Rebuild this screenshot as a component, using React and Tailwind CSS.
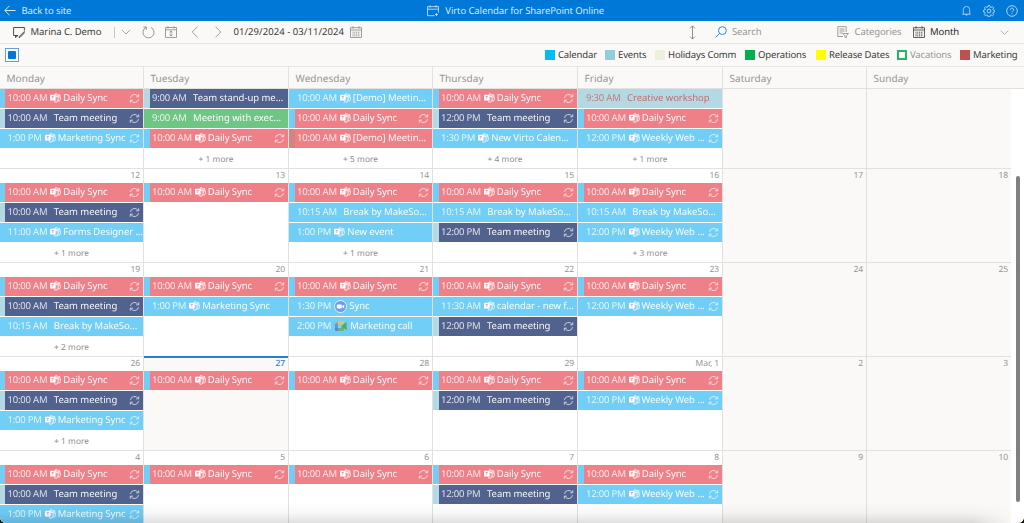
import React from 'react';

const EVENT_COLORS = {
    red: 'bg-[#f08088] text-white',
    blue: 'bg-[#70cef7] text-white',
    navy: 'bg-[#51628f] text-white',
    green: 'bg-[#6fc684] text-white',
    teal: 'bg-[#b2d9e4] text-[#cc6664]',
};

const STRIP_COLORS = {
    blue: 'border-l-[#70cef7]',
    teal: 'border-l-[#b2d9e4]',
    brown: 'border-l-[#d08580]',
};

const daily = { time: '10:00 AM', icon: 'teams', title: 'Daily Sync', color: 'red', strip: 'blue', repeat: true };
const team = (time) => ({ time, title: 'Team meeting', color: 'navy', strip: 'teal', repeat: true });
const marketing = { time: '1:00 PM', icon: 'teams', title: 'Marketing Sync', color: 'blue', repeat: true };
const weekly = { time: '12:00 PM', icon: 'teams', title: 'Weekly Web ...', color: 'blue', repeat: true };
const breakBy = { time: '10:15 AM', title: 'Break by MakeSo...', color: 'blue' };

const weeks = [
    [
        { events: [daily, team('10:00 AM'), marketing] },
        {
            events: [
                { time: '9:00 AM', title: 'Team stand-up me...', color: 'navy', strip: 'teal' },
                { time: '9:00 AM', title: 'Meeting with exec...', color: 'green' },
                daily,
            ],
            more: 1,
        },
        {
            events: [
                { time: '10:00 AM', icon: 'teams', title: '[Demo] Meetin...', color: 'blue' },
                daily,
                { time: '10:00 AM', icon: 'teams', title: '[Demo] Meetin...', color: 'red', strip: 'brown' },
            ],
            more: 5,
        },
        {
            events: [daily, team('12:00 PM'), { time: '1:30 PM', icon: 'teams', title: 'New Virto Calen...', color: 'blue' }],
            more: 4,
        },
        { events: [{ time: '9:30 AM', title: 'Creative workshop', color: 'teal' }, daily, weekly], more: 1 },
        {},
        {},
    ],
    [
        {
            date: '12',
            events: [daily, team('10:00 AM'), { time: '11:00 AM', icon: 'teams', title: 'Forms Designer ...', color: 'blue' }],
            more: 1,
        },
        { date: '13', events: [daily] },
        { date: '14', events: [daily, breakBy, { time: '1:00 PM', icon: 'teams', title: 'New event', color: 'blue' }], more: 1 },
        { date: '15', events: [daily, breakBy, team('12:00 PM')] },
        { date: '16', events: [daily, breakBy, weekly], more: 3 },
        { date: '17' },
        { date: '18' },
    ],
    [
        { date: '19', events: [daily, team('10:00 AM'), breakBy], more: 2 },
        { date: '20', events: [daily, { ...marketing, repeat: false }] },
        {
            date: '21',
            events: [
                daily,
                { time: '1:30 PM', icon: 'zoom', title: 'Sync', color: 'blue' },
                { time: '2:00 PM', icon: 'meet', title: 'Marketing call', color: 'blue' },
            ],
        },
        {
            date: '22',
            events: [daily, { time: '11:30 AM', icon: 'teams', title: 'calendar - new f...', color: 'blue' }, team('12:00 PM')],
        },
        { date: '23', events: [daily, weekly] },
        { date: '24' },
        { date: '25' },
    ],
    [
        { date: '26', events: [daily, team('10:00 AM'), marketing], more: 1 },
        { date: '27', events: [daily], today: true },
        { date: '28', events: [daily] },
        { date: '29', events: [daily, team('12:00 PM')] },
        { date: 'Mar, 1', events: [daily, weekly] },
        { date: '2' },
        { date: '3' },
    ],
    [
        { date: '4', events: [daily, team('10:00 AM'), marketing] },
        { date: '5', events: [daily] },
        { date: '6', events: [daily] },
        { date: '7', events: [daily, team('12:00 PM')] },
        { date: '8', events: [daily, weekly] },
        { date: '9' },
        { date: '10' },
    ],
];

const days = ['Monday', 'Tuesday', 'Wednesday', 'Thursday', 'Friday', 'Saturday', 'Sunday'];

const legend = [
    { name: 'Calendar', box: 'bg-[#00bcf2]', width: 'w-[60px]' },
    { name: 'Events', box: 'bg-[#92cddc]', width: 'w-[50px]' },
    { name: 'Holidays Comm', box: 'bg-[#ebf1dd]', width: 'w-[90px]' },
    { name: 'Operations', box: 'bg-[#00b050]', width: 'w-[71px]' },
    { name: 'Release Dates', box: 'bg-[#ffff00]', width: 'w-[81px]' },
    { name: 'Vacations', box: 'border-2 border-[#21b865] bg-white', width: 'w-[63px]', off: true },
    { name: 'Marketing', box: 'bg-[#c0504d]', width: 'w-[60px]' },
];

const GRID = 'grid grid-cols-[144px_145px_144px_145px_145px_144px_144px]';

const Icon = ({ children, className, box = '0 0 12 12', stroke = 0.8 }) => (
    <svg viewBox={box} className={`shrink-0 ${className}`} fill="none" stroke="currentColor" strokeWidth={stroke}>
        {children}
    </svg>
);

const TeamsIcon = () => (
    <svg viewBox="0 0 11 10" className="h-[10px] w-[11px] shrink-0" fill="none" stroke="#fff" strokeWidth="0.8">
        <circle cx="6.2" cy="1.8" r="1.2" fill="#fff" fillOpacity="0.2" />
        <circle cx="9.2" cy="2.2" r="0.8" fill="#fff" fillOpacity="0.2" />
        <path d="M5.5 3.6h2.7v3.2a2.4 2.4 0 0 1-4.3 1.5" fill="#fff" fillOpacity="0.15" />
        <path d="M8.4 3.8h1.9v2.5a1.7 1.7 0 0 1-2 1.7" />
        <rect x="0" y="1.8" width="5.6" height="5.6" rx="0.5" fill="#fff" stroke="none" />
        <path d="M1.5 3.4h2.6M2.8 3.4v2.6" stroke="#d98f9c" strokeWidth="0.7" />
    </svg>
);

const ZoomIcon = () => (
    <svg viewBox="0 0 13 13" className="h-[13px] w-[13px] shrink-0">
        <circle cx="6.5" cy="6.5" r="6.4" fill="#e3ebfb" />
        <circle cx="6.5" cy="6.5" r="5.5" fill="#6c9cf0" />
        <rect x="2.8" y="4.6" width="5" height="3.9" rx="0.8" fill="#fff" />
        <path d="M8.1 6.1 10.2 4.7v3.7L8.1 7z" fill="#fff" />
    </svg>
);

const MeetIcon = () => (
    <svg viewBox="0 0 12 10" className="h-[10px] w-[12px] shrink-0">
        <path d="M0 2.9 2.9 0v2.9z" fill="#e0807c" />
        <path d="M2.9 0h5.2q.9 0 .9.9v3.4L6.4 5V2.9H2.9z" fill="#e6c25c" />
        <path d="M0 2.9h2.9V7H0z" fill="#6a90d8" />
        <path d="M0 7h2.9v3H.9Q0 10 0 9.1z" fill="#5f80cc" />
        <path d="M2.9 2.9h3.5V7H2.9z" fill="#8bcfd8" />
        <path d="M2.9 7h3.5V5L9 4.3v4.8q0 .9-.9.9H2.9z" fill="#5bb878" />
        <path d="M6.4 5 11 1.2q.6-.4.6.3v7q0 .7-.6.3z" fill="#52a86c" />
    </svg>
);

const RepeatIcon = () => (
    <Icon className="ml-auto h-[11px] w-[11px] opacity-85" stroke={0.85}>
        <path d="M1.6 5.4A4.5 4.5 0 0 1 10 3.9M10.6 1.4v2.8H7.8M10.4 6.6A4.5 4.5 0 0 1 2 8.1M1.4 10.6V7.8h2.8" />
    </Icon>
);

const BrandIcon = ({ name }) => {
    if (name === 'teams') return <span className="mr-[2px] ml-[3px] flex"><TeamsIcon /></span>;
    if (name === 'zoom') return <span className="mr-[2.5px] ml-[2.5px] flex"><ZoomIcon /></span>;
    if (name === 'meet') return <span className="mr-[3.5px] ml-[3.5px] flex"><MeetIcon /></span>;
    return <span className="w-[6.5px] shrink-0" />;
};

const Event = ({ event, first }) => (
    <div
        className={`flex h-[19px] items-center overflow-hidden pr-[3px] pb-px whitespace-nowrap ${EVENT_COLORS[event.color]} ${
            event.strip
                ? `${first ? 'border-l-[5px] pl-[2.5px]' : 'border-l-[6px] pl-[2px]'} ${STRIP_COLORS[event.strip]}`
                : first ? 'pl-[7.5px]' : 'pl-[8px]'
        }`}
    >
        <span className="tracking-[-0.2px] opacity-80">{event.time}</span>
        <BrandIcon name={event.icon} />
        <span className={`opacity-95 ${event.icon ? 'tracking-[-0.08px]' : 'tracking-[-0.04px]'}`}>{event.title}</span>
        {event.repeat && <RepeatIcon />}
    </div>
);

const DayCell = ({ day, index, firstWeek }) => {
    const weekend = index > 4;
    return (
        <div
            className={`flex min-w-0 flex-col ${index < 6 ? 'border-r border-r-[#e3e1df]' : ''} ${
                weekend || day.today ? 'bg-[#faf9f8]' : 'bg-white'
            } ${firstWeek ? '' : 'border-t border-t-[#e3e1df]'}`}
        >
            {!firstWeek && (
                <div
                    className={`relative h-[14px] shrink-0 pr-[3px] text-right text-[8.5px] leading-[14px] ${
                        day.today ? 'font-medium text-[#2b7cd3]' : 'text-[#979593]'
                    }`}
                >
                    {day.today && <div className="absolute -top-px left-0 h-[2px] w-full bg-[#2b7cd3]" />}
                    {day.date}
                </div>
            )}
            <div className="flex flex-col gap-px">
                {(day.events || []).map((event, i) => (
                    <Event key={i} event={event} first={index === 0} />
                ))}
            </div>
            {day.more && (
                <div className="mt-[4px] text-center text-[8.3px] leading-[15px] tracking-[0.08px] text-[#8f8d8b]">+ {day.more} more</div>
            )}
        </div>
    );
};

const CalendarIcon = ({ className }) => (
    <Icon className={className}>
        <path d="M.5 1.7h11v9.8H.5zM.5 4h11M3 .2v2.4M9 .2v2.4" />
        <path d="M2.5 6.2h7.5M2.5 8h7.5M2.5 9.8h7.5" strokeDasharray="1 .8" strokeWidth="1" />
    </Icon>
);

const Header = () => (
    <header className="grid h-[21px] shrink-0 grid-cols-3 items-center bg-[#0078d7] text-[#d5e9fa]">
        <div className="flex items-center pl-[4px]">
            <Icon className="h-[12px] w-[12px]" stroke={1}>
                <path d="M11.5 5.5H.8M5.5.8.8 5.5l4.7 4.7" />
            </Icon>
            <span className="ml-[5.5px]">Back to site</span>
        </div>
        <div className="flex items-center pl-[86px] whitespace-nowrap">
            <Icon className="h-[12px] w-[12px]">
                <path d="M7.5 10.7H.5V1.6h11v6M.5 4.2h11M3 .2v2.4M9 .2v2.4" />
                <path d="M9.5 8v3M8 9.5h3" />
            </Icon>
            <span className="ml-[6px]">Virto Calendar for SharePoint Online</span>
        </div>
        <div className="flex items-center justify-end gap-[11px] pr-[6px]">
            <Icon className="h-[12px] w-[11px]">
                <path d="M1.5 9.5h9M2.5 9.5V4.6a3.5 3.5 0 0 1 7 0v4.9M4.8 9.8a1.3 1.3 0 0 0 2.4 0" />
            </Icon>
            <Icon className="h-[12px] w-[12px]">
                <circle cx="6" cy="6" r="1.9" />
                <path d="M5.1.6h1.8l.3 1.5 1 .4 1.3-.9 1.2 1.3-.8 1.2.4 1 1.4.2v1.7l-1.5.3-.4 1 .9 1.3-1.3 1.2-1.2-.8-1 .4-.3 1.4H5.1l-.3-1.4-1-.4-1.3.8-1.2-1.2.9-1.3-.4-1L.4 7V5.3l1.4-.3.4-1-.8-1.2 1.2-1.2 1.2.8 1-.4z" />
            </Icon>
            <Icon className="h-[12px] w-[12px]">
                <circle cx="6" cy="6" r="5.3" />
                <path d="M4.4 4.8a1.6 1.6 0 1 1 2.4 1.3q-.8.5-.8 1.3M6 8.3v.9" />
            </Icon>
        </div>
    </header>
);

const Toolbar = () => (
    <div className="flex h-[23px] shrink-0 items-center border-b border-[#e8e6e4] bg-[#faf9f8] text-[#3b3a39]">
        <Icon className="ml-[13px] h-[12px] w-[12px]" stroke={0.9}>
            <path d="M5 9.5H.6V1.5h10.8v3M2.5 9.5v2L5 9.5M11.3 5.5 6.5 10.3l-.5 1.2 1.3-.4 4.6-4.7z" />
        </Icon>
        <span className="ml-[5.5px] w-[71.5px] tracking-[-0.08px] whitespace-nowrap">Marina C. Demo</span>
        <div className="ml-[12px] h-[11px] w-px bg-[#c8c6c4]" />
        <Icon className="ml-[6px] h-[10px] w-[10px] text-[#979593]" stroke={1}>
            <path d="m1 3.5 5 5 5-5" />
        </Icon>
        <Icon className="ml-[11px] h-[13px] w-[13px] text-[#8a8886]">
            <path d="M8.3 1.3a5.1 5.1 0 1 1-4.6 0M1.3.9H4v2.700" />
        </Icon>
        <Icon className="ml-[10px] h-[12px] w-[12px] text-[#8a8886]">
            <path d="M.5 1.5h11v10H.5zM.5 3.8h11M3 .2v2.3M9 .2v2.3M6 5v5M4.5 6.3 6 4.9l1.5 1.4M4.5 8.7 6 10.1l1.5-1.4" />
        </Icon>
        <Icon className="ml-[12px] h-[12px] w-[12px] text-[#8a8886]">
            <path d="M8.5.7 3.2 6l5.3 5.3" />
        </Icon>
        <Icon className="ml-[11px] h-[12px] w-[12px] text-[#8a8886]">
            <path d="M3.5.7 8.8 6l-5.3 5.3" />
        </Icon>
        <span className="ml-[9.5px] w-[112.5px] tracking-[0.06px] whitespace-nowrap">01/29/2024 - 03/11/2024</span>
        <CalendarIcon className="ml-[4px] h-[12px] w-[12px] text-[#8a8886]" />
        <Icon className="ml-auto h-[15px] w-[7px] text-[#7a7876]" box="0 0 7 15">
            <path d="M3.5 1v13M1 3.4 3.5.9 6 3.4M1 11.6l2.5 2.5L6 11.6" />
        </Icon>
        <Icon className="ml-[19px] h-[12px] w-[12px] text-[#2b88d8]" stroke={1}>
            <circle cx="7.4" cy="4.6" r="3.9" />
            <path d="M4.5 7.4.5 11.5" />
        </Icon>
        <span className="ml-[5px] w-[105px] text-[#979593]">Search</span>
        <Icon className="h-[12px] w-[12px] text-[#8a8886]">
            <path d="M6 10.5H.8V.6h8.4V6M2.5 3h5M2.5 5h5M2.5 7h3M5.8 7.5h5.7L9.4 9.7v2l-1.5-.6V9.7z" />
        </Icon>
        <span className="ml-[5.5px] w-[58px] text-[#979593]">Categories</span>
        <CalendarIcon className="h-[12px] w-[12px] text-[#3b3a39]" />
        <span className="ml-[5.5px] w-[70px] text-[#252423]">Month</span>
        <Icon className="mr-[15px] h-[9px] w-[9px] text-[#979593]" stroke={1}>
            <path d="m1 3.5 5 5 5-5" />
        </Icon>
    </div>
);

const Legend = () => (
    <div className="flex h-[23px] shrink-0 items-center border-b border-[#e8e6e4] bg-[#faf9f8] pl-[5px] text-[#3b3a39]">
        <div className="flex h-[14px] w-[14px] items-center justify-center border border-[#5ba3e3] bg-white">
            <div className="h-[8px] w-[8px] rounded-[1px] bg-[#0078d7]" />
        </div>
        <div className="ml-auto flex items-center pr-[4px]">
            {legend.map((item) => (
                <div key={item.name} className={`flex items-center whitespace-nowrap ${item.width}`}>
                    <div className={`h-[10px] w-[10px] shrink-0 ${item.box}`} />
                    <span className={`ml-[3px] tracking-[-0.15px] ${item.off ? 'text-[#979593]' : ''}`}>{item.name}</span>
                </div>
            ))}
        </div>
    </div>
);

const App = () => {
    return (
        <div className="h-[523px] w-[1024px] bg-[#1c1608]">
            <div className="relative flex h-full flex-col overflow-hidden rounded-b-[6px] bg-white font-['Noto_Sans',sans-serif] text-[9.5px] leading-[14px] tracking-[-0.1px] [text-rendering:geometricPrecision]">
                <Header />
                <Toolbar />
                <Legend />
                <div className="h-[22px] shrink-0 border-b border-[#e3e1df] bg-[#faf9f8]">
                    <div className={`${GRID} h-[21px]`}>
                        {days.map((name, i) => (
                            <div
                                key={name}
                                className={`pl-[6.5px] text-[10px] leading-[22px] tracking-[0.05px] text-[#979593] ${i < 6 ? 'border-r border-[#e3e1df]' : ''}`}
                            >
                                {name}
                            </div>
                        ))}
                    </div>
                </div>
                <div className="flex min-h-0 flex-1">
                    <div className="w-[1011px]">
                        {weeks.map((week, w) => (
                            <div key={w} className={`${GRID} ${w === 0 ? 'h-[79px]' : 'h-[94px]'}`}>
                                {week.map((day, i) => (
                                    <DayCell key={i} day={day} index={i} firstWeek={w === 0} />
                                ))}
                            </div>
                        ))}
                    </div>
                    <div className="flex-1 bg-white pt-[87px] pl-[4.5px]">
                        <div className="h-[326px] w-[4px] rounded-full bg-[#808080]" />
                    </div>
                </div>
                <div className="absolute bottom-0 left-0 h-[20px] w-full bg-linear-to-b from-transparent via-black/3 to-black/12 mask-r-from-95% mask-r-to-99%" />
            </div>
        </div>
    );
};

export default App;
